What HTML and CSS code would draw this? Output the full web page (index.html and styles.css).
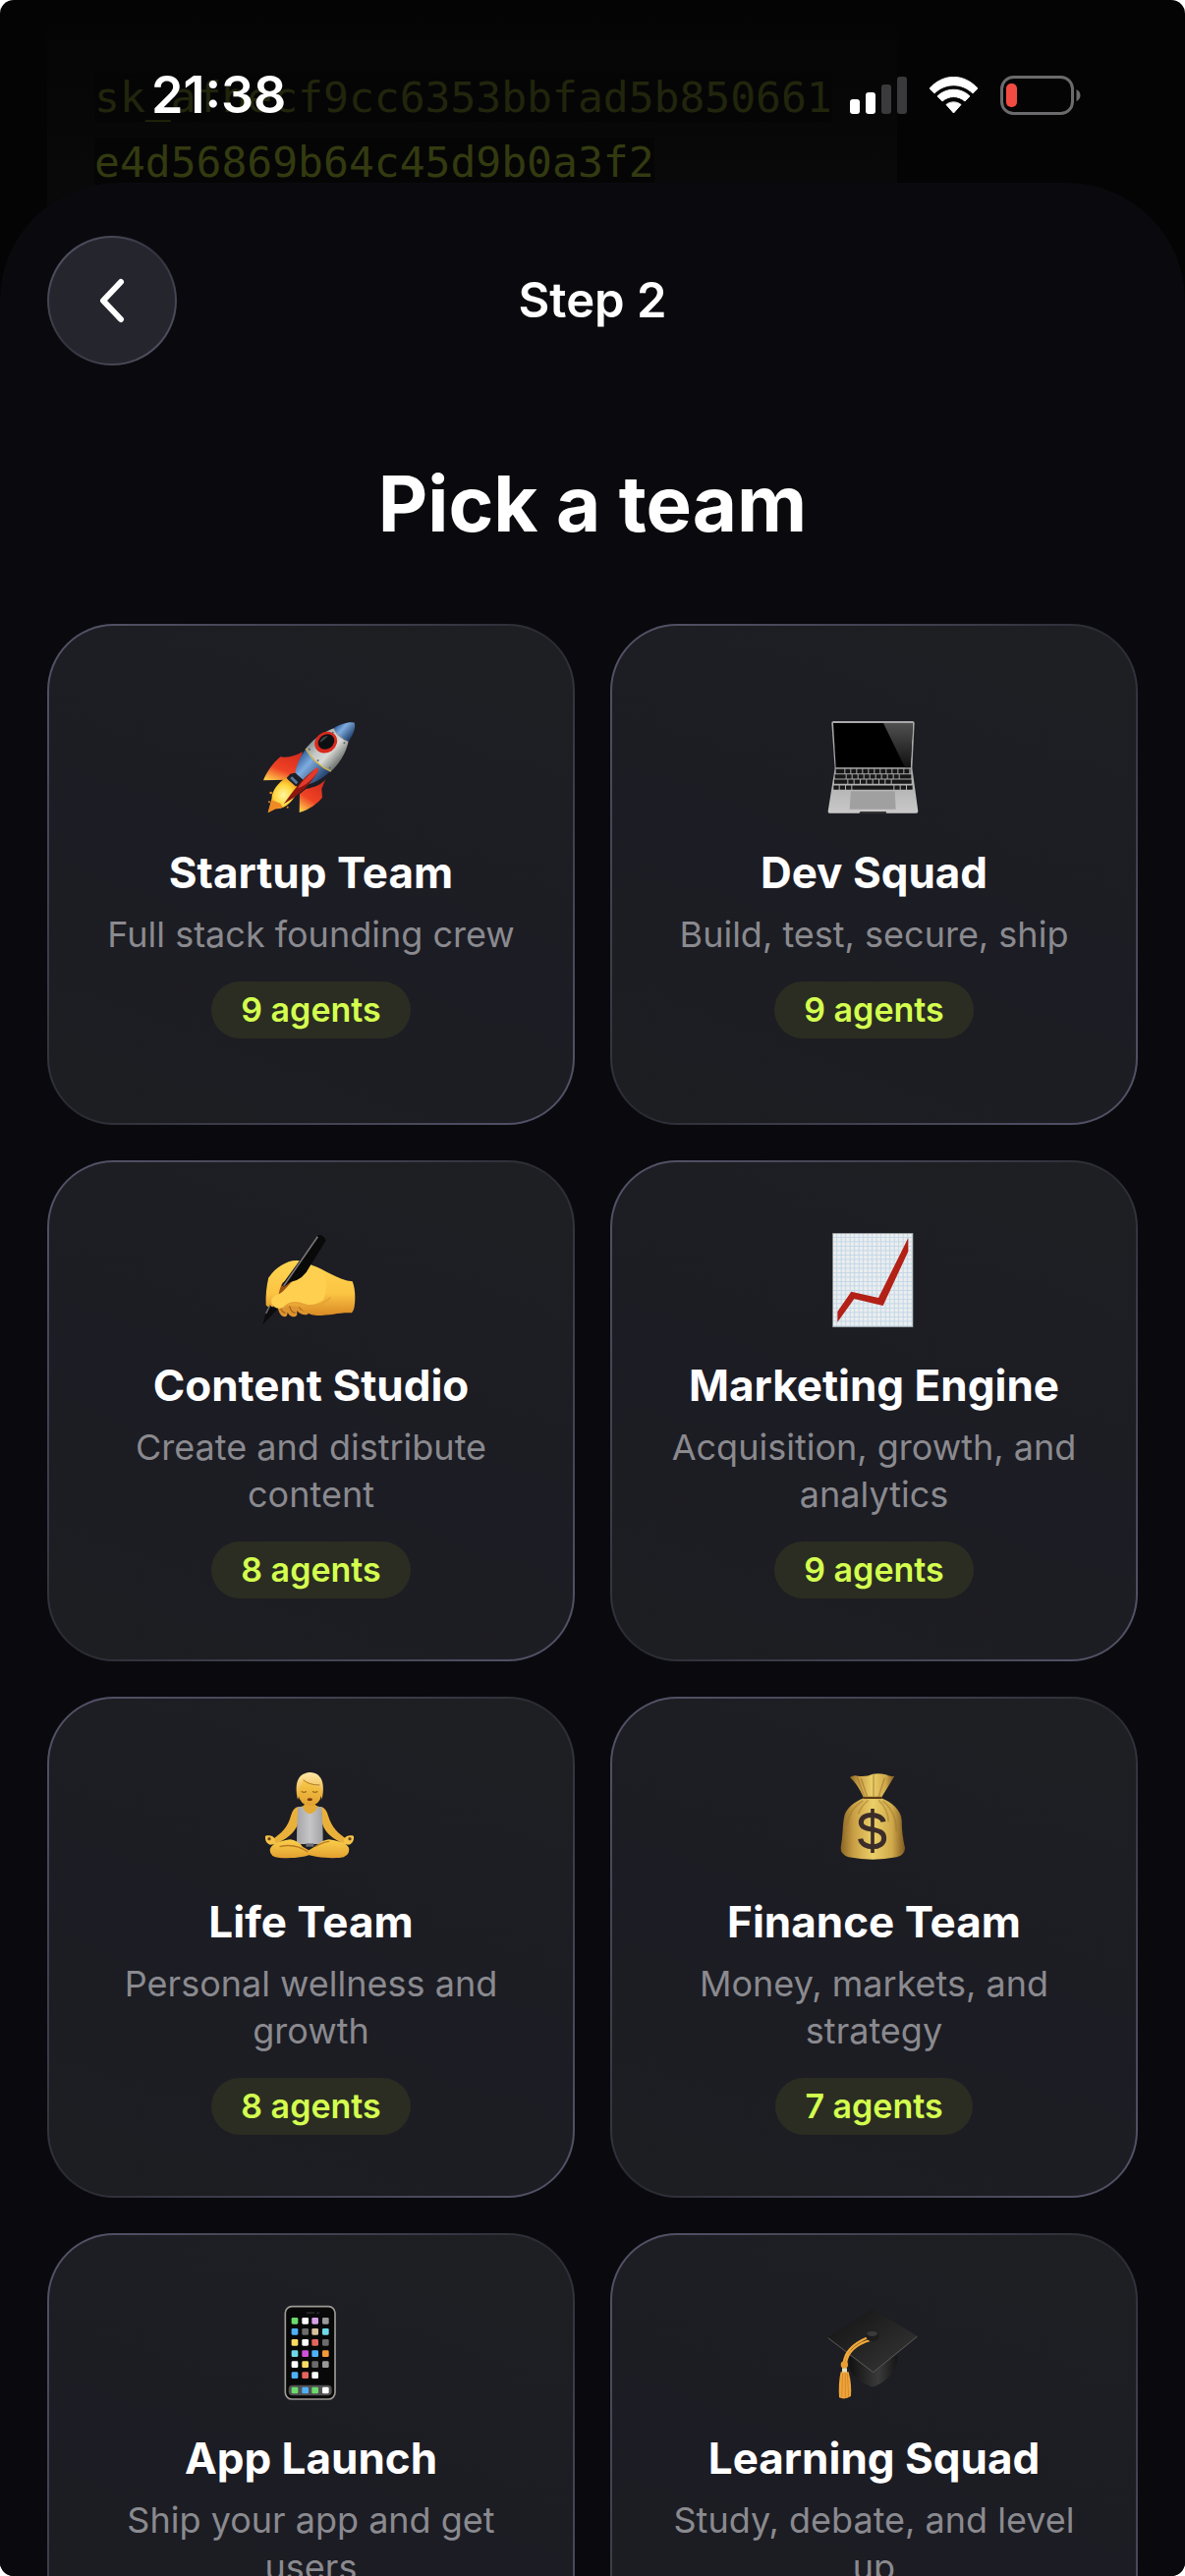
FILE: index.html
```html
<!DOCTYPE html>
<html lang="en">
<head>
  <meta charset="UTF-8">
  <meta name="viewport" content="width=device-width, initial-scale=1.0">
  <title>Pick a team</title>
  <link rel="stylesheet" href="styles.css">
</head>
<body>
  <div class="screen">
    <div class="status-bar">
      <span class="time">21:38</span>
      <div class="status-icons">
        <svg width="58" height="38" viewBox="0 0 58 38">
          <rect x="0" y="23" width="10" height="15" rx="3" fill="#fff"/>
          <rect x="16" y="16" width="10" height="22" rx="3" fill="#fff"/>
          <rect x="32" y="8" width="10" height="30" rx="3" fill="#3a3a3c"/>
          <rect x="48" y="0" width="10" height="38" rx="3" fill="#3a3a3c"/>
        </svg>
        <svg width="51" height="38" viewBox="0 0 51 38">
          <path d="M1 12C15 -3.500 36 -3.500 50 12L45 17C34 6 17 6 6 17Z" fill="#fff" stroke="#fff" stroke-linejoin="round"/>
          <path d="M9 20C18 11 33 11 42 20L37 25C30 19 21 19 14 25Z" fill="#fff" stroke="#fff" stroke-linejoin="round"/>
          <path d="M18 28.500C22 25 29 25 33 28.500L25.500 37Z" fill="#fff" stroke="#fff" stroke-linejoin="round"/>
        </svg>
        <svg width="82" height="40" viewBox="0 0 82 40">
          <rect x="1.500" y="1.500" width="72" height="37" rx="12" fill="none" stroke="#6b6b6d" stroke-width="3"/>
          <rect x="6" y="8" width="11" height="24" rx="5" fill="#f24b42"/>
          <path d="M77.500 14q4 2 4 6t-4 6z" fill="#6b6b6d"/>
        </svg>
      </div>
    </div>

    <div class="previous">
      <div class="key-box">
        <code class="key"><span>sk_afbecf9cc6353bbfad5b850661</span><br><span class="key-end">e4d56869b64c45d9b0a3f2</span></code>
      </div>
    </div>

    <main class="sheet">
      <header class="nav">
        <button class="back" type="button" aria-label="Back">
          <svg width="26" height="46" viewBox="0 0 26 46"><path d="M22 4L4 23L22 42" fill="none" stroke="#fff" stroke-width="6" stroke-linecap="round" stroke-linejoin="round"/></svg>
        </button>
        <span class="step">Step 2</span>
      </header>
      <h1>Pick a team</h1>

      <div class="teams">
        <button class="card" type="button">
          <svg class="emoji" viewBox="4 6 390 348">
            <defs>
              <linearGradient id="fin" x1="0.700" y1="0" x2="0.200" y2="1"><stop offset="0" stop-color="#d52c1e"/><stop offset=".6" stop-color="#ef4324"/><stop offset="1" stop-color="#ffc84a"/></linearGradient>
              <linearGradient id="hull" x1="0" y1="0" x2="1" y2="0"><stop offset="0" stop-color="#8d9495"/><stop offset=".3" stop-color="#c3c7c6"/><stop offset=".6" stop-color="#d9dad6"/><stop offset="1" stop-color="#6e736f"/></linearGradient>
              <linearGradient id="blue" x1="0" y1="0" x2="1" y2="0"><stop offset="0" stop-color="#2f5f9d"/><stop offset=".35" stop-color="#7facdf"/><stop offset="1" stop-color="#1d3b66"/></linearGradient>
              <radialGradient id="flame"><stop offset="0" stop-color="#fff7a0"/><stop offset=".6" stop-color="#ffd63c"/><stop offset="1" stop-color="#f49a22"/></radialGradient>
            </defs>
            <path d="M172 132C158 142 130 152 104 148C82 166 62 194 52 220L118 218L134 200L154 196Z" fill="url(#fin)"/>
            <path d="M242 216C232 232 206 242 182 246L163 262L162 318C194 308 218 290 232 272L230 246Z" fill="url(#fin)"/>
            <path d="M122 212C98 224 76 256 78 274L66 318L88 306C112 312 146 286 160 244Z" fill="url(#flame)"/>
            <path d="M78 280L66 319L92 306L112 303L104 290Z" fill="#f08a24"/>
            <circle cx="75" cy="258" r="4" fill="#e58b28"/><circle cx="70" cy="286" r="3" fill="#e58b28"/><circle cx="126" cy="302" r="3" fill="#e58b28"/>
            <path d="M134 204L160 228L150 238L126 216Z" fill="#1d242b"/>
            <path d="M140 208L158 226L152 232L134 214Z" fill="#56789b"/>
            <!-- body along the rocket axis -->
            <g transform="translate(236 140) rotate(42)">
              <path d="M-52 12C-50 52 -38 82 -27 100L27 100C38 82 50 52 52 12Z" fill="url(#blue)"/>
              <path d="M-52 24C-56 -24 -40 -62 -30 -80H30C42 -60 56 -24 52 24Q0 42 -52 24Z" fill="url(#hull)"/>
              <path d="M-30 -80C-24 -102 -8 -128 6 -134C20 -128 28 -100 31 -80Q0 -68 -30 -80Z" fill="url(#blue)"/>
              <path d="M-52 24Q0 42 52 24" fill="none" stroke="#d6b640" stroke-width="4"/>
              <path d="M-30 -79Q0 -67 30 -79" fill="none" stroke="#67717c" stroke-width="2"/>
              <g fill="#606767"><circle cx="-42" cy="18" r="3"/><circle cx="0" cy="26" r="3"/><circle cx="42" cy="18" r="3"/><circle cx="-23" cy="-68" r="3"/><circle cx="24" cy="-68" r="3"/></g>
            </g>
            <ellipse cx="243" cy="104" rx="36" ry="31" transform="rotate(-35 243 104)" fill="#d9291d"/>
            <ellipse cx="244" cy="102" rx="26" ry="22" transform="rotate(-35 244 102)" fill="#0d1013"/>
            <path d="M224 105Q230 84 250 84Q240 96 224 105Z" fill="#3d4447"/>
            <path d="M218 182C196 190 158 230 114 292C146 274 196 238 219 192Q222 184 218 182Z" fill="#8d160e"/>
            <path d="M220 184Q214 178 206 188C184 210 162 230 158 244C178 238 206 216 220 190Z" fill="#e33a2c"/>
          </svg>
          <span class="name">Startup Team</span>
          <span class="desc">Full stack founding crew</span>
          <span class="badge">9 agents</span>
        </button>

        <button class="card" type="button">
          <svg class="emoji" viewBox="14 6 390 348">
            <defs>
              <linearGradient id="deck" x1="0" y1="0" x2="0" y2="1"><stop offset="0" stop-color="#a5a5a5"/><stop offset="1" stop-color="#c9c9c9"/></linearGradient>
              <linearGradient id="glare" x1="0" y1="0" x2="0" y2="1"><stop offset="0" stop-color="#505050"/><stop offset="1" stop-color="#111"/></linearGradient>
            </defs>
            <path d="M84 39H325Q331 39 331 45L324 184H88L78 45Q78 39 84 39Z" fill="#a9a9a9"/>
            <path d="M83 45H326L319 181H91Z" fill="#000"/>
            <path d="M236 45H326L319 181H302Z" fill="url(#glare)"/>
            <path d="M88 182H324L342 314Q342 320 336 320H246L240 315H170L162 320H72Q66 320 67 314Z" fill="url(#deck)"/>
            <path d="M137 253H271L274 308H133Z" fill="#a0a0a0"/>
            <path d="M163 315H246L240 321H170Z" fill="#333"/>
            <g fill="none" stroke="#171717" stroke-width="13">
              <path d="M91 192H319" stroke-dasharray="26 3 15 3 15 3 15 3 15 3 15 3 15 3 15 3 15 3 15 3 15 3 15 3"/>
              <path d="M88 208H321" stroke-dasharray="33 3 15 3 15 3 15 3 15 3 15 3 15 3 15 3 15 3 15 3 40 3"/>
              <path d="M86 224H324" stroke-dasharray="40 3 16 3 16 3 16 3 16 3 16 3 16 3 16 3 60 3"/>
              <path d="M84 242H325" stroke-dasharray="16 3 16 3 16 3 126 3 16 3 16 3 20 3"/>
            </g>
          </svg>
          <span class="name">Dev Squad</span>
          <span class="desc">Build, test, secure, ship</span>
          <span class="badge">9 agents</span>
        </button>

        <button class="card" type="button">
          <svg class="emoji" viewBox="8 12 390 348">
            <defs>
              <linearGradient id="hand" x1="0" y1="0" x2="0" y2="1"><stop offset="0" stop-color="#ffd552"/><stop offset=".6" stop-color="#fbc443"/><stop offset="1" stop-color="#d98a25"/></linearGradient>
            </defs>
            <path d="M100 250C98 280 108 298 122 298Q130 296 130 284Q136 298 152 298Q162 296 158 280Q176 296 192 290L200 250Z" fill="#dc9430"/>
            <path d="M106 262Q112 286 124 286M136 264Q140 286 154 286M162 262Q172 280 190 280" fill="none" stroke="#a8601c" stroke-width="4"/>
            <path d="M74 176C92 148 130 124 160 126Q190 130 204 140C242 152 284 186 328 190Q336 210 336 240Q336 276 326 286C288 284 262 294 220 294Q186 292 166 268L96 262Q72 276 64 262Q62 220 72 178Z" fill="url(#hand)"/>
            <path d="M114 194Q126 184 144 190L108 230L100 244Q104 214 114 194Z" fill="#9a5214"/>
            <path d="M80 254Q80 236 98 230C120 224 132 198 152 188Q180 180 202 144C240 152 260 190 240 246Q210 270 164 256Q130 258 110 272Q88 274 80 254Z" fill="#ffd050"/>
            <path d="M118 270C136 252 160 252 180 260Q224 276 260 240" fill="none" stroke="#e5a135" stroke-width="5" stroke-linecap="round"/>
            <path d="M222 50Q230 44 240 54Q250 62 244 70L198 144Q178 186 138 192L120 206L112 202Z" fill="#090909"/>
            <path d="M222 53L118 204" fill="none" stroke="#77777a" stroke-width="5"/>
            <path d="M76 262L84 270L100 274L54 322L64 284Z" fill="#0c0c0d"/>
            <path d="M76 264L64 288" fill="none" stroke="#77777a" stroke-width="4"/>
          </svg>
          <span class="name">Content Studio</span>
          <span class="desc">Create and distribute content</span>
          <span class="badge">8 agents</span>
        </button>

        <button class="card" type="button">
          <svg class="emoji" viewBox="14 42 390 348">
            <defs>
              <pattern id="grid" x="82" y="73" width="13.500" height="13.500" patternUnits="userSpaceOnUse"><rect width="14" height="14" fill="#eceeee"/><path d="M0 12H14M12 0V14" stroke="#c0d6e8" stroke-width="3"/></pattern>
            </defs>
            <rect x="82" y="73" width="244" height="286" fill="url(#grid)" stroke="#99a0a3" stroke-width="2"/>
            <path d="M96 312L138 251L221 270L312 87V128L235 294L147 273L96 344Z" fill="#b32016"/>
          </svg>
          <span class="name">Marketing Engine</span>
          <span class="desc">Acquisition, growth, and analytics</span>
          <span class="badge">9 agents</span>
        </button>

        <button class="card" type="button">
          <svg class="emoji" viewBox="6 30 390 348">
            <defs>
              <linearGradient id="skin" x1="0" y1="0" x2="0" y2="1"><stop offset="0" stop-color="#fbd04c"/><stop offset="1" stop-color="#e2a030"/></linearGradient>
              <linearGradient id="hair" x1="0" y1="0" x2="0" y2="1"><stop offset="0" stop-color="#ffe9a8"/><stop offset="1" stop-color="#e9a52c"/></linearGradient>
              <linearGradient id="vest" x1="0" y1="0" x2="1" y2="0"><stop offset="0" stop-color="#a5a5a7"/><stop offset=".5" stop-color="#c6c6c8"/><stop offset="1" stop-color="#a2a2a4"/></linearGradient>
            </defs>
            <path d="M162 174Q144 176 138 202C130 236 106 258 84 272L90 288C122 274 148 258 160 226Z" fill="#eab13a"/>
            <path d="M230 174Q246 178 252 202C262 236 284 258 308 272L302 288C270 274 244 258 234 226Z" fill="#eab13a"/>
            <path d="M180 140H212V168Q222 176 232 174L224 202H170L160 174Q176 176 180 166Z" fill="#e5ab36"/>
            <path d="M160 174L174 174Q182 196 197 196Q212 194 220 174L232 174Q236 220 236 288H156Q156 220 160 174Z" fill="url(#vest)"/>
            <path d="M158 120Q158 84 196 82Q234 84 234 120Q232 160 210 168Q196 174 182 168Q160 158 158 120Z" fill="url(#skin)"/>
            <path d="M159 152C150 110 154 72 196 69C238 70 242 112 233 152L230 140L230 116Q204 112 174 92Q172 108 164 116L163 142Z" fill="url(#hair)"/>
            <path d="M176 92Q194 108 226 108" fill="none" stroke="#ae761f" stroke-width="3"/>
            <path d="M170 128Q178 132 186 128M204 128Q212 132 220 128" fill="none" stroke="#7c5010" stroke-width="3"/>
            <ellipse cx="196" cy="152" rx="8" ry="4" fill="#743514"/>
            <path d="M60 270Q58 260 68 262Q82 260 88 270L92 288L74 290Q60 284 60 270Z" fill="#f5c34a"/>
            <path d="M330 270Q332 260 322 262Q308 260 302 270L298 288L316 290Q330 284 330 270Z" fill="#f5c34a"/>
            <circle cx="72" cy="272" r="5" fill="#6b4714"/><circle cx="318" cy="272" r="5" fill="#6b4714"/>
            <path d="M184 286H208V296H184Z" fill="#6c6f76"/>
            <path d="M136 274Q78 282 74 306Q74 328 104 330C144 332 180 330 208 316L174 296Q158 276 136 274Z" fill="url(#skin)"/>
            <path d="M254 274Q314 282 316 304Q316 328 286 330C246 332 206 328 178 316L218 292Q234 276 254 274Z" fill="url(#skin)"/>
            <path d="M104 296Q150 284 190 312M212 296Q234 282 256 280" fill="none" stroke="#b97a20" stroke-width="4"/>
          </svg>
          <span class="name">Life Team</span>
          <span class="desc">Personal wellness and growth</span>
          <span class="badge">8 agents</span>
        </button>

        <button class="card" type="button">
          <svg class="emoji" viewBox="14 30 390 348">
            <defs>
              <linearGradient id="bag" x1="0" y1="0" x2="1" y2="0"><stop offset="0" stop-color="#8b6524"/><stop offset=".2" stop-color="#c99f45"/><stop offset=".5" stop-color="#ebcf68"/><stop offset=".8" stop-color="#d0a94b"/><stop offset="1" stop-color="#7f5a20"/></linearGradient>
            </defs>
            <path d="M134 84Q146 76 158 80Q184 84 204 74Q222 70 244 76Q258 84 270 80Q252 110 230 146H176Q158 106 134 84Z" fill="url(#bag)"/>
            <path d="M206 76V142M168 88L186 142M240 86L222 142M156 84L178 142" stroke="#9a7130" stroke-width="4" opacity=".6"/>
            <path d="M176 148H230C262 160 292 186 292 216Q292 256 302 300Q302 322 276 328Q204 342 130 328Q104 320 106 298C114 256 110 230 118 198C126 176 150 158 176 148Z" fill="url(#bag)"/>
            <path d="M174 156Q132 180 126 230M190 154Q164 176 160 196M222 154Q250 180 252 220M234 156Q276 190 276 250" fill="none" stroke="#9c742c" stroke-width="5" opacity=".45"/>
            <rect x="174" y="143" width="58" height="7" rx="3" fill="#5f3c16"/>
            <path d="M236 220C232 194 168 190 168 222C168 254 238 232 238 270C238 306 170 304 166 272" fill="none" stroke="#3b2d29" stroke-width="15"/>
            <path d="M203 180V315" stroke="#3b2d29" stroke-width="11"/>
          </svg>
          <span class="name">Finance Team</span>
          <span class="desc">Money, markets, and strategy</span>
          <span class="badge">7 agents</span>
        </button>

        <button class="card" type="button">
          <svg class="emoji" viewBox="4 18 390 348">
            <rect x="119" y="50" width="152" height="283" rx="20" fill="#080808" stroke="#9d9a95" stroke-width="5"/>
            <rect x="183" y="66" width="26" height="7" rx="3" fill="#242424"/><circle cx="219" cy="70" r="4" fill="#242424"/>
            <rect x="129" y="290" width="132" height="32" rx="12" fill="#515151"/>
            <g fill="#6bdb6b"><rect x="138" y="84" width="20" height="20" rx="4"/><rect x="138" y="296" width="20" height="20" rx="4"/><rect x="200" y="296" width="20" height="20" rx="4"/></g>
            <g fill="#fff"><rect x="170" y="84" width="20" height="20" rx="4"/><rect x="170" y="150" width="20" height="20" rx="4"/><rect x="138" y="217" width="20" height="20" rx="4"/><rect x="200" y="250" width="20" height="20" rx="4"/><rect x="232" y="296" width="20" height="20" rx="4"/></g>
            <g fill="#4fb0f8"><rect x="138" y="117" width="20" height="20" rx="4"/><rect x="200" y="184" width="20" height="20" rx="4"/><rect x="138" y="250" width="20" height="20" rx="4"/><rect x="170" y="296" width="20" height="20" rx="4"/></g>
            <g fill="#6b6b6b"><rect x="170" y="117" width="20" height="20" rx="4"/><rect x="232" y="150" width="20" height="20" rx="4"/><rect x="200" y="217" width="20" height="20" rx="4"/></g>
            <g fill="#999"><rect x="232" y="84" width="20" height="20" rx="4"/><rect x="232" y="217" width="20" height="20" rx="4"/></g>
            <g fill="#fbdc62"><rect x="138" y="150" width="20" height="20" rx="4"/><rect x="170" y="217" width="20" height="20" rx="4"/></g>
            <g fill="#e5655c"><rect x="200" y="150" width="20" height="20" rx="4"/><rect x="170" y="250" width="20" height="20" rx="4"/></g>
            <g fill="#6fd8e8"><rect x="232" y="117" width="20" height="20" rx="4"/><rect x="138" y="184" width="20" height="20" rx="4"/></g>
            <rect x="200" y="84" width="20" height="20" rx="4" fill="#d9a0e8"/>
            <rect x="200" y="117" width="20" height="20" rx="4" fill="#d8c29c"/>
            <rect x="170" y="184" width="20" height="20" rx="4" fill="#cf50d8"/>
            <rect x="232" y="184" width="20" height="20" rx="4" fill="#f59a35"/>
          </svg>
          <span class="name">App Launch</span>
          <span class="desc">Ship your app and get users</span>
          <span class="badge">8 agents</span>
        </button>

        <button class="card" type="button">
          <svg class="emoji" viewBox="14 18 390 348">
            <defs>
              <linearGradient id="cap" x1="0" y1="0" x2="1" y2="1"><stop offset="0" stop-color="#121212"/><stop offset="1" stop-color="#383838"/></linearGradient>
              <linearGradient id="cap-base" x1="0" y1="0" x2="1" y2="0"><stop offset="0" stop-color="#111"/><stop offset=".6" stop-color="#3a3a3a"/><stop offset="1" stop-color="#151515"/></linearGradient>
            </defs>
            <path d="M132 200L280 200C280 250 240 284 202 296C164 284 134 258 132 232Z" fill="url(#cap-base)"/>
            <path d="M202 58L341 141L205 254L65 145Z" fill="url(#cap)"/>
            <path d="M67 146L205 251L339 142" fill="none" stroke="#5a5a5a" stroke-width="3"/>
            <path d="M190 144C156 158 118 182 115 224M198 152C164 162 126 184 122 224" fill="none" stroke="#f2a93a" stroke-width="7" stroke-linecap="round"/>
            <ellipse cx="203" cy="140" rx="20" ry="17" fill="#1d1d1d"/>
            <ellipse cx="202" cy="133" rx="16" ry="8" fill="#3a3a3a"/>
            <circle cx="117" cy="228" r="11" fill="#eb9f32"/>
            <path d="M106 250H130Q140 288 137 324Q118 336 101 328Q98 284 106 250Z" fill="#efa43a"/>
            <path d="M112 254L109 326M120 254V328M126 254L130 326" stroke="#c97e20" stroke-width="2"/>
            <rect x="110" y="238" width="15" height="13" fill="#e8dfb6"/>
          </svg>
          <span class="name">Learning Squad</span>
          <span class="desc">Study, debate, and level up</span>
          <span class="badge">8 agents</span>
        </button>
      </div>
    </main>
  </div>
</body>
</html>
```
FILE: styles.css
```css
* {
  box-sizing: border-box;
}
html {
  background: #fff;
}
body {
  margin: 0;
  font-family: Inter, "Liberation Sans", sans-serif;
  color: #fff;
}
.screen {
  position: relative;
  display: flex;
  flex-direction: column;
  height: 100vh;
  overflow: hidden;
  border-radius: 14px;
  background: #040405;
}

/* status bar sits over the page behind the sheet */
.status-bar {
  position: absolute;
  top: 0;
  left: 0;
  right: 0;
  z-index: 2;
  display: flex;
  justify-content: space-between;
  align-items: center;
  padding: 66px 106px 0 154px;
}
.time {
  font-size: 52px;
  line-height: 62px;
  font-weight: 600;
}
.status-icons {
  display: flex;
  align-items: center;
  gap: 22px;
}

.previous {
  height: 186px;
  padding-left: 48px;
}
.key-box {
  width: 865px;
  height: 320px;
  padding: 66px 48px 0;
  background: linear-gradient(#040405, #09090a 186px);
}
.key {
  font-family: "DejaVu Sans Mono", "Liberation Mono", monospace;
  font-size: 43px;
  line-height: 66px;
  color: #21250c;
}
.key span {
  background: #050506;
}
.key .key-end {
  color: #333a10;
}

.sheet {
  position: relative;
  flex: 1;
  min-height: 0;
  overflow: hidden;
  padding: 54px 48px 0;
  border-radius: 120px 120px 0 0;
  background: #0a0a0e;
}
.nav {
  display: grid;
  grid-template-columns: 132px 1fr 132px;
  align-items: center;
}
.back {
  display: flex;
  align-items: center;
  justify-content: center;
  width: 132px;
  height: 132px;
  padding: 0;
  border: 2px solid transparent;
  border-radius: 50%;
  background: linear-gradient(#25252e, #25252e) padding-box, linear-gradient(135deg, #5a596c, #33333e, #5a596c) border-box;
}
.step {
  font-size: 49px;
  line-height: 60px;
  font-weight: 600;
  text-align: center;
}
h1 {
  margin: 90px 0 72px;
  font-size: 78px;
  line-height: 101px;
  font-weight: 700;
  text-align: center;
}

.teams {
  display: grid;
  grid-template-columns: 1fr 1fr;
  gap: 36px;
}
.card {
  display: flex;
  flex-direction: column;
  align-items: center;
  justify-content: center;
  min-height: 510px;
  padding: 0 48px;
  border: 2px solid transparent;
  border-radius: 68px;
  background: linear-gradient(200deg, #1e1f22, #1c1c24 55%, #1d1e21) padding-box, linear-gradient(135deg, #55546a, #3c3b4a 35%, #2a2a32 50%, #3c3b4a 65%, #55546a) border-box;
  color: #fff;
  font-family: inherit;
  text-align: center;
}
.emoji {
  width: 130px;
  height: 116px;
  margin-bottom: 22px;
}
.name {
  font-size: 44px;
  line-height: 54px;
  font-weight: 700;
}
.desc {
  margin: 12px 0 24px;
  font-size: 36px;
  line-height: 48px;
  color: #8a8a8f;
}
.badge {
  padding: 6px 30px;
  border-radius: 29px;
  background: #2b2d22;
  color: #d4ff4f;
  font-size: 34px;
  line-height: 46px;
  font-weight: 600;
}
```
